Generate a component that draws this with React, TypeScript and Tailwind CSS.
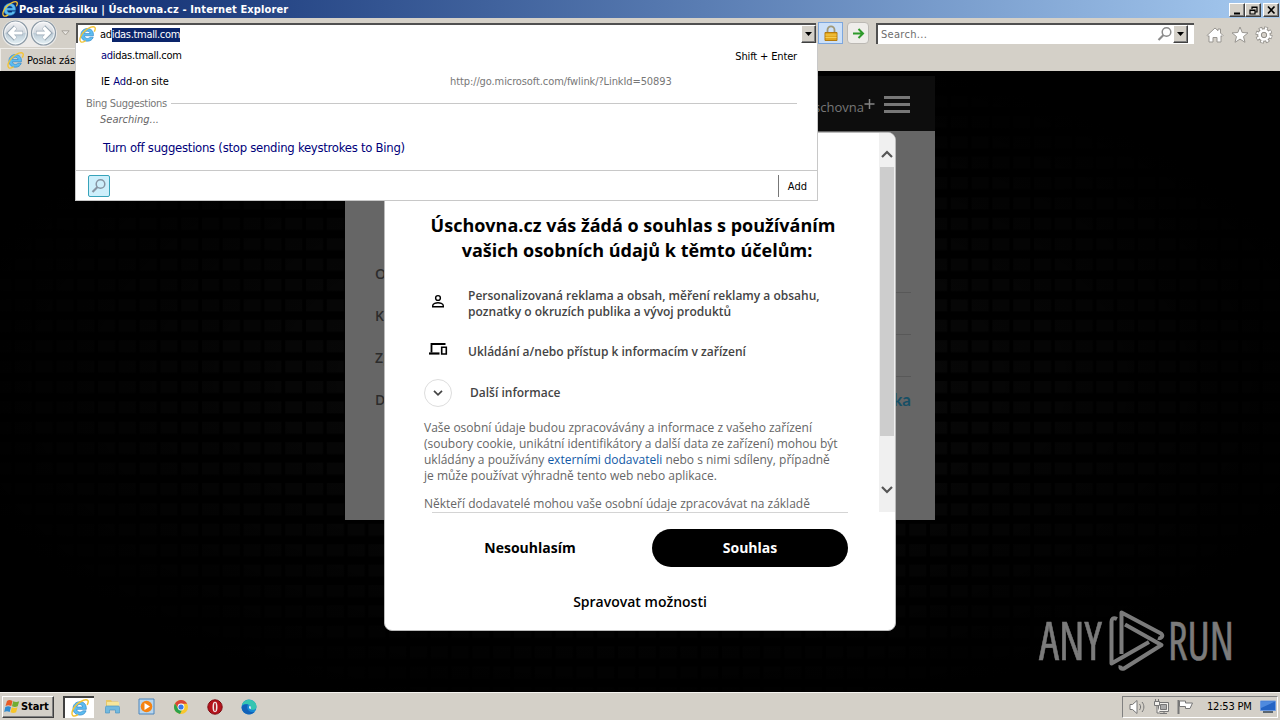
import type { ReactNode } from 'react';

const tahoma = "font-['DejaVu_Sans_Condensed','DejaVu_Sans',sans-serif] [font-stretch:condensed]";
const openSans = "font-['Open_Sans',sans-serif] [font-stretch:normal]";
const raised = "border border-t-white border-l-white border-r-[#404040] border-b-[#404040] bg-[#d4d0c8] shadow-[inset_-1px_-1px_0_#808080]";

const IeIcon = ({ size = 16 }: { size?: number }) => (
    <svg width={size} height={size} viewBox="0 0 16 16" className="shrink-0">
        <path d="M13.6 9.2H5.1c.2 1.7 1.4 2.5 2.9 2.5 1.1 0 1.9-.4 2.3-1.2h3.1C12.6 13 10.600 14.300 8 14.300c-3.700 0-6.200-2.400-6.200-5.900S4.400 2.400 8 2.400c3.700 0 5.900 2.700 5.600 6.800zM5.200 7.100h5.200C10.200 5.700 9.200 4.900 7.800 4.900S5.400 5.700 5.200 7.100z" fill="#5dbcf0" stroke="#2a84c8" strokeWidth=".6" />
        <path d="M1.700 14.800C-.3 13.100 1.600 8 5.600 4.500 9.300 1.200 13.600-.2 14.900 1.300c.7.800.4 2.100-.3 3.500M1.700 14.800c.9.700 2.500.3 4.100-.7" fill="none" stroke="#f4c434" strokeWidth="1.300" strokeLinecap="round" />
    </svg>
);

const Magnifier = ({ color }: { color: string }) => (
    <svg width="16" height="16" viewBox="0 0 16 16" fill="none" className="shrink-0" stroke={color}>
        <circle cx="9.500" cy="6" r="4.300" strokeWidth="1.500" />
        <path d="M6.500 9L1.500 14" strokeWidth="2.200" />
    </svg>
);

const TitleBar = () => (
    <div className="flex h-[18px] shrink-0 items-center bg-linear-to-r from-[#0a246a] to-[#a6caf0] pr-[1px] pl-[2px]">
        <IeIcon />
        <span className="mt-[2px] ml-[1px] flex-1 text-[11px] font-bold tracking-[0.12px] whitespace-nowrap text-white">Poslat zásilku | Úschovna.cz - Internet Explorer</span>
        <div className="mt-px flex">
            <WinButton><path d="M3 9.500h6" strokeWidth="2" /></WinButton>
            <WinButton><path d="M5 5V3h5v5H8M5 3.500h5M3 6h5v4H3zM3 6.500h5" strokeWidth="1.200" /></WinButton>
            <span className="w-[2px]" />
            <WinButton><path d="M3 2.500l6.500 7M9.500 2.500L3 9.500" strokeWidth="1.700" /></WinButton>
        </div>
    </div>
);

const WinButton = ({ children }: { children: ReactNode }) => (
    <button className={`flex h-[14px] w-[16px] items-center justify-center ${raised}`}>
        <svg width="13" height="12" viewBox="0 0 13 12" fill="none" stroke="#000">{children}</svg>
    </button>
);

const DropButton = () => (
    <button className={`flex h-[18px] w-[15px] shrink-0 items-center justify-center ${raised}`}>
        <svg width="7" height="4"><path d="M0 0h7L3.500 4z" fill="#000" /></svg>
    </button>
);

const NavCircle = ({ back }: { back?: boolean }) => (
    <svg width="27" height="26" viewBox="0 0 27 26">
        <defs>
            <linearGradient id="nav" x1="0" y1="0" x2="0" y2="1">
                <stop offset="0" stopColor="#f4f4f6" />
                <stop offset=".48" stopColor="#d3d9df" />
                <stop offset=".52" stopColor="#bccbd6" />
                <stop offset="1" stopColor="#e6f2f6" />
            </linearGradient>
        </defs>
        <circle cx="13.500" cy="13" r="12" fill="url(#nav)" stroke="#8c9aa6" strokeWidth="1.200" />
        <circle cx="13.500" cy="13" r="10.800" fill="none" stroke="#fff" strokeOpacity=".7" />
        <g transform={back ? undefined : 'translate(27 0) scale(-1 1)'} fill="none">
            <path d="M21 13H8M13.500 7l-6 6 6 6" stroke="#98a7b4" strokeWidth="4.600" />
            <path d="M20.500 13H8M13.500 7.500L8 13l5.500 5.500" stroke="#fff" strokeWidth="3.200" />
        </g>
    </svg>
);

const Toolbar = () => (
    <div className="h-[53px] shrink-0 bg-[#d4d0c8]">
        <div className="flex h-[30px] items-center">
            <div className="flex w-[76px] items-center pl-[2px]">
                <div className="flex h-[27px] gap-px rounded-full bg-[#eceae8]">
                    <NavCircle back />
                    <NavCircle />
                </div>
                <svg width="9" height="6" className="ml-[4px]"><path d="M.8.800h7.400L4.500 5z" fill="#e8e6e2" stroke="#a6a29a" /></svg>
            </div>
            <div className="flex h-[21px] w-[740px] items-center border-t-2 border-l-2 border-t-[#505050] border-l-[#505050] bg-white pl-[1px]">
                <IeIcon size={17} />
                <div className="ml-[4px] flex-1 text-[11px] leading-[15px] tracking-[-0.32px]">
                    ad<span className="inline-block h-[14px] bg-[#0a246a] leading-[14px] text-white">idas.tmall.com</span>
                </div>
                <DropButton />
            </div>
            <div className="ml-[2px] flex h-[22px] w-[25px] items-center justify-center border border-[#7da7de] bg-[#cce0f8]">
                <svg width="14" height="17" viewBox="0 0 14 17">
                    <path d="M3.500 8V5a3.500 3.700 0 017 0v3" fill="none" stroke="#a09878" strokeWidth="1.800" />
                    <path d="M1 7.500h12v8H1z" fill="#e3a71c" stroke="#b47b10" />
                    <path d="M1.500 10h11M1.500 12.500h11" stroke="#f4cd55" />
                </svg>
            </div>
            <div className="ml-[4px] flex h-[22px] w-[22px] items-center justify-center rounded-sm border border-[#bcb9b4] bg-[#efedea]">
                <svg width="13" height="11" viewBox="0 0 13 11" fill="none" stroke="#2f9a2b" strokeWidth="2"><path d="M1 5.500h10M6.500 1L11 5.500 6.500 10" /></svg>
            </div>
            <div className="ml-[7px] flex h-[21px] w-[318px] items-center border-t-2 border-l-2 border-t-[#505050] border-l-[#505050] bg-white pl-[3px] text-[11px] text-[#6d6d6d]">
                <span className="mt-[2px] flex-1 tracking-[0.3px]">Search...</span>
                <Magnifier color="#8b8b8b" />
                <DropButton />
                <span className="w-[6px]" />
            </div>
            <div className="mt-[4px] ml-[12px] flex gap-[7px]">
                <svg width="18" height="18" viewBox="0 0 18 18"><path d="M1 9.500L9 2l3 2.700V3h2.500v4L17 9.500l-1 1-1-.8V16h-4v-4.500H7V16H3V9.700l-1 .8z" fill="#fff" stroke="#989590" /></svg>
                <svg width="18" height="18" viewBox="0 0 18 18"><path d="M9 1l2.200 5.500 5.800.4-4.500 3.700 1.500 5.700-5-3.200-5 3.200 1.500-5.700L1 6.900l5.800-.4z" fill="#fff" stroke="#989590" /></svg>
                <svg width="18" height="18" viewBox="0 0 18 18" fill="none" className="-ml-px">
                    <circle cx="9" cy="9" r="6.600" stroke="#918e89" strokeWidth="3.800" strokeDasharray="3.500 1.680" />
                    <circle cx="9" cy="9" r="5.500" stroke="#918e89" strokeWidth="2.600" />
                    <circle cx="9" cy="9" r="6.600" stroke="#fff" strokeWidth="2.400" strokeDasharray="2.100 3.080" strokeDashoffset="-.7" />
                    <circle cx="9" cy="9" r="4.400" stroke="#fff" strokeWidth="2.800" />
                    <circle cx="9" cy="9" r="2.700" stroke="#918e89" />
                </svg>
            </div>
        </div>
        <div className="flex h-[23px] w-[75px] items-center border-t border-l border-[#eeece8] pl-[6px]">
            <IeIcon size={17} />
            <span className="mt-[2px] ml-[3px] w-[48px] overflow-hidden text-[11px] tracking-[-0.1px] whitespace-nowrap">Poslat zás</span>
        </div>
    </div>
);

const Suggestions = () => (
    <div className="absolute top-[43px] left-[75px] flex h-[158px] w-[743px] flex-col border border-t-0 border-[#c8c8c8] bg-white text-[11px] leading-[14px] whitespace-nowrap">
        <div className="flex pt-[6px] pr-[20px] pl-[25px]">
            <span className="flex-1 tracking-[-0.28px]"><b className="font-normal text-[#00007a]">ad</b>idas.tmall.com</span>
            <span className="mt-px tracking-[-0.15px]">Shift + Enter</span>
        </div>
        <div className="flex pt-[11px] pl-[25px]">
            <span className="w-[349px] tracking-[-0.05px]">IE <b className="font-normal text-[#00007a]">Ad</b>d-on site</span>
            <span className="tracking-[-0.1px] text-[#777]">http://go.microsoft.com/fwlink/?LinkId=50893</span>
        </div>
        <div className="flex items-center pt-[8px] pr-[20px] pl-[10px] text-[#777]">
            <span className="tracking-[-0.3px]">Bing Suggestions</span>
            <span className="mb-[2px] ml-[4px] h-px flex-1 bg-[#c8c8c8]" />
        </div>
        <div className="pt-[2px] pl-[24px] text-[#666] italic">Searching...</div>
        <div className="pt-[14px] pl-[27px] text-[13px] tracking-[-0.28px] text-[#00007a]">Turn off suggestions (stop sending keystrokes to Bing)</div>
        <div className="mt-auto flex h-[30px] items-center border-t border-[#c8c8c8] pl-[12px]">
            <span className="flex h-[22px] w-[22px] items-center justify-center rounded-[2px] border border-[#37a3ba] bg-[#cdeffb]"><Magnifier color="#8795a3" /></span>
            <span className="ml-auto h-[22px] w-px bg-[#777]" />
            <span className="mt-[2px] mr-[10px] ml-[9px]">Add</span>
        </div>
    </div>
);

const FormRow = ({ label, children }: { label: string, children?: ReactNode }) => (
    <div className="flex h-[42px]">
        <span className="w-[120px] pt-[12px]">{label}</span>
        <span className="flex-1 border-b border-[#585858] pt-[11px] text-right">{children}</span>
    </div>
);

const UschovnaPage = () => (
    <div className={`mx-auto h-[444px] w-[590px] bg-[#666] ${openSans}`}>
        <div className="flex h-[55px] items-center justify-end bg-[#0d0d0d] pr-[25px] text-[#777]">
            <span className="mt-[8px] text-[13px]">Úschovna</span>
            <svg width="11" height="11" className="mt-px mr-[9px]"><path d="M5.500 0v10M.5 5h10" stroke="#858585" strokeWidth="1.500" /></svg>
            <div className="mt-[2px] flex flex-col gap-[4px]">
                <span className="h-[3px] w-[26px] bg-[#777]" />
                <span className="h-[3px] w-[26px] bg-[#777]" />
                <span className="h-[3px] w-[26px] bg-[#777]" />
            </div>
        </div>
        <div className="pt-[120px] pr-[24px] pl-[30px] text-[14px] font-semibold text-[#2c2c2c]">
            <FormRow label="Od" />
            <FormRow label="Komu" />
            <FormRow label="Zpráva" />
            <div className="flex h-[42px] justify-between pt-[12px]"><span>Doručení</span><span className="-mt-px font-['Lato',sans-serif] text-[17px] leading-[24px] font-bold text-[#174f65]">Zásilka</span></div>
        </div>
    </div>
);

const ConsentDialog = () => (
    <div className={`absolute top-[132px] left-[384px] flex h-[499px] w-[512px] flex-col overflow-hidden rounded-lg border border-[#bbb] bg-white text-[#444] ${openSans}`}>
        <div className="flex h-[379px]">
            <div className="w-[494px] overflow-hidden px-[39px] pt-[80px]">
                <h1 className="w-[420px] -translate-x-px text-center text-[18px] leading-[25px] font-bold whitespace-nowrap text-black">Úschovna.cz vás žádá o souhlas s používáním<br /><span className="relative left-[4px]">vašich osobních údajů k těmto účelům:</span></h1>
                <div className="mt-[25px] flex text-[12px] leading-[16px] font-semibold whitespace-nowrap">
                    <svg width="28" height="28" viewBox="0 0 28 28" className="mr-[16px]" fill="none" stroke="#000" strokeWidth="1.400"><circle cx="14" cy="10" r="2.400" /><path d="M8.700 18.800v-1.100c0-2 3.500-3 5.300-3s5.300 1 5.300 3v1.100z" /></svg>
                    <p>Personalizovaná reklama a obsah, měření reklamy a obsahu,<br />poznatky o okruzích publika a vývoj produktů</p>
                </div>
                <div className="mt-[16px] flex h-[32px] items-center text-[12px] font-semibold">
                    <svg width="28" height="28" viewBox="0 0 28 28" className="mr-[16px] mb-[4px]" fill="none" stroke="#000"><path d="M7.500 16.500V8H21.500" strokeWidth="1.800" /><path d="M5 17.500h10.500" strokeWidth="2.200" /><path d="M17.700 11.200h4.600v6.800h-4.600z" strokeWidth="1.600" /></svg>
                    Ukládání a/nebo přístup k informacím v zařízení
                </div>
                <div className="mt-[11px] flex h-[28px] items-center text-[12px] font-semibold">
                    <span className="mr-[18px] flex h-[28px] w-[28px] items-center justify-center rounded-full border border-[#ddd]">
                        <svg width="10" height="6" fill="none" stroke="#444" strokeWidth="1.700"><path d="M1 .8l4 4 4-4" /></svg>
                    </span>
                    Další informace
                </div>
                <p className="mt-[13px] text-[12px] leading-[16px] whitespace-nowrap text-[#666]">Vaše osobní údaje budou zpracovávány a informace z vašeho zařízení<br />(soubory cookie, unikátní identifikátory a další data ze zařízení) mohou být<br />ukládány a používány <a className="text-[#1259a6]">externími dodavateli</a> nebo s nimi sdíleny, případně<br />je může používat výhradně tento web nebo aplikace.</p>
                <p className="mt-[12px] text-[12px] leading-[16px] whitespace-nowrap text-[#666]">Někteří dodavatelé mohou vaše osobní údaje zpracovávat na základě</p>
            </div>
            <div className="flex w-[16px] flex-col items-center bg-[#f0f0f0] pt-[17px]">
                <svg width="12" height="8" fill="none" stroke="#555" strokeWidth="2.200"><path d="M1 7l5-5 5 5" /></svg>
                <span className="mt-[9px] h-[269px] w-[14px] bg-[#cdcdcd]" />
                <svg width="12" height="8" className="mt-[50px]" fill="none" stroke="#555" strokeWidth="2.200"><path d="M1 1l5 5 5-5" /></svg>
            </div>
        </div>
        <div className="mr-[47px] ml-[47px] border-t border-[#d4d4d4] pt-[16px] text-[14px] font-bold text-black">
            <div className="flex justify-between">
                <button className="h-[38px] w-[196px] pb-px">Nesouhlasím</button>
                <button className="h-[38px] w-[196px] rounded-full bg-black pb-px text-white">Souhlas</button>
            </div>
            <button className="mt-[15px] h-[38px] w-full font-semibold">Spravovat možnosti</button>
        </div>
    </div>
);

const Watermark = () => (
    <div className="absolute top-[597px] left-[1030px]">
        <svg width="220" height="88" viewBox="-8 -12 220 88" className="font-['Open_Sans',sans-serif] text-[52px] [font-stretch:condensed]">
            <g fill="#7b7b7b" stroke="#7b7b7b" strokeWidth=".6">
                <text x="1" y="50.500" textLength="63" lengthAdjust="spacingAndGlyphs">ANY</text>
                <text x="130" y="50.500" textLength="66" lengthAdjust="spacingAndGlyphs">RUN</text>
            </g>
            <g fill="none" stroke="#7b7b7b" strokeWidth="4" strokeLinejoin="round">
                <path d="M79 10c-4-2-5.500 0-5.500 3v41.500L111 33" />
                <path d="M83.500 45V3.500L123 24.500c3 3-.5 5.500-3 4.500" />
                <path d="M87 15.500L123.500 36 86 59.500c-3 1-4-.5-3.500-3" />
            </g>
        </svg>
    </div>
);

const Task = ({ children, active }: { children: ReactNode; active?: boolean }) => (
    <div className={`flex h-[22px] w-[31px] items-center justify-center ${active ? 'border-t-2 border-l-2 border-[#404040] bg-white' : ''}`}>{children}</div>
);

const Taskbar = () => (
    <div className="flex h-[28px] shrink-0 items-center border-t border-[#f4f2ee] bg-[#d4d0c8] text-[11px]">
        <button className={`ml-[2px] flex h-[22px] w-[52px] items-center pl-px font-bold ${raised}`}>
            <svg width="17" height="17" viewBox="0 0 17 17">
                <path d="M3 3c2-1.500 3.500-1 5.500 0L7.300 8C5 7 3.500 7 1.500 8z" fill="#e85b24" />
                <path d="M9.200 3.300c2 1 4 1 6 0l-1.500 5c-2 1-3.500 1-5.700 0z" fill="#71ad32" />
                <path d="M1.300 9C3.300 8 5 8 7 9l-1.300 5c-2-1-3.500-1-5.500 0z" fill="#318bd0" />
                <path d="M7.800 9.300c2 1 4 1 5.700 0l-1.400 5c-2 1-3.500 1-5.600 0z" fill="#f7c529" />
            </svg>
            <span className="mt-[2px] tracking-[-0.1px]">Start</span>
        </button>
        <div className="ml-[9px] flex gap-[3px]">
            <Task active><IeIcon size={18} /></Task>
            <Task><svg width="17" height="17" viewBox="0 0 17 17"><path d="M2 2h5l1 1.500h6V12H2z" fill="#e8c766" /><path d="M3 4h12v7H3z" fill="#f7e59a" /><path d="M1.500 15V9.500c0-1 .5-1.500 1.500-1.500h11c1 0 1.500.5 1.500 1.500V15h-4v-3h-6v3z" fill="#72b9df" stroke="#4c96c4" strokeWidth=".7" /></svg></Task>
            <Task><svg width="17" height="17" viewBox="0 0 17 17"><path d="M1 1h15v15H1z" fill="#b8d6ee" stroke="#4d86bd" /><circle cx="8.500" cy="8.500" r="5.800" fill="#f58312" /><path d="M6.500 5v7l5.500-3.500z" fill="#fff" /></svg></Task>
            <Task><svg width="16" height="16" viewBox="0 0 16 16"><circle cx="8" cy="8" r="7" fill="#f9c72c" /><path d="M2 4.400A7 7 0 0114.100 4.700H8a3.300 3.300 0 00-3 4.600z" fill="#db4437" /><path d="M2 4.400l3.100 5A3.300 3.300 0 009 11l-2 3.900A7 7 0 012 4.400z" fill="#2ba24c" /><circle cx="8" cy="8" r="3.400" fill="#fff" /><circle cx="8" cy="8" r="2.600" fill="#3978e8" /></svg></Task>
            <Task><svg width="16" height="16" viewBox="0 0 16 16"><circle cx="8" cy="8" r="7.200" fill="#b5121b" stroke="#7e0b12" /><ellipse cx="8" cy="8" rx="2.500" ry="5.200" fill="#f1e6e6" /><ellipse cx="8" cy="8" rx=".9" ry="4.200" fill="#a60c14" /></svg></Task>
            <Task><svg width="16" height="16" viewBox="0 0 16 16"><circle cx="8" cy="8" r="7.500" fill="#1689d4" /><path d="M.8 6.500C2 1.500 7-.5 11 1.300c3.500 1.600 5 5 4.300 7.200-.6 2.200-3.500 3-5.800 1.800 1-1.500.5-4-2-4.700C4.600 4.800 2 5.500.8 6.500z" fill="#36c5b1" /><path d="M7 5.600C5 8 6 13.500 13.500 13 9 17.500 1 15 .6 8.500 1 6 4 4.500 7 5.600z" fill="#1261b8" /><path d="M9.500 10.300c-2-.8-1.500-2.500-.7-3.800 1 .9 1.300 2.400.7 3.800z" fill="#fff" /></svg></Task>
        </div>
        <div className="mr-[2px] ml-auto flex h-[22px] w-[156px] items-center border border-t-[#808080] border-r-white border-b-white border-l-[#808080] pl-[6px]">
            <svg width="17" height="16" viewBox="0 0 17 16" fill="#fff" stroke="#777"><path d="M1 5.500h2.500L8 1.500v13l-4.500-4H1z" /><path d="M10.500 5c1.500 2 1.500 4 0 6M13 3c2.500 3 2.500 7 0 10" fill="none" /></svg>
            <svg width="17" height="16" viewBox="0 0 17 16" className="ml-[7px]" fill="#f3f1ed" stroke="#777"><path d="M5.500 3.500h10v9h-10zM7 14.500h7M11 12.500v2" /><path d="M7.500 5.500h6v5h-6z" fill="#aaa" /><path d="M1.500 2.500h5v4h-5zM2.500 0v2M5.500 0v2M4 6.500V14h3" /></svg>
            <svg width="17" height="16" viewBox="0 0 17 16" className="ml-[7px]" fill="#fff" stroke="#777"><path d="M1.500 1v14" strokeWidth="2" /><path d="M2.500 2h6v2h7L13 9.500H8.500v-2h-6z" /></svg>
            <span className="mt-[2px] ml-[13px] flex-1 tracking-[-0.2px] whitespace-nowrap">12:53 PM</span>
            <svg width="16" height="14" viewBox="0 0 16 14" className="mr-px"><path d="M.5 1h15v9.500H.5z" fill="#2564c4" stroke="#6d9ae0" /><path d="M1 1.500h14L1 8z" fill="#4f8ade" /><path d="M3 12h10" stroke="#345" strokeWidth="1.500" /></svg>
        </div>
    </div>
);

const App = () => (
    <div className={`relative flex h-[720px] w-[1280px] flex-col overflow-hidden text-black ${tahoma}`}>
        <TitleBar />
        <Toolbar />
        <div className="relative flex-1 bg-black pt-[5px]">
            <svg className="absolute inset-0 h-full w-full">
                <defs>
                    <pattern id="tiles" width="20.800" height="20.400" patternUnits="userSpaceOnUse" x="14.800" y="4"><rect width="17" height="12" fill="#080808" /></pattern>
                    <radialGradient id="fade" cx=".5" cy=".5" r=".55"><stop offset=".3" stopColor="#000" stopOpacity="0" /><stop offset="1" stopColor="#000" /></radialGradient>
                </defs>
                <rect width="100%" height="100%" fill="url(#tiles)" />
                <rect width="100%" height="100%" fill="url(#fade)" />
            </svg>
            <div className="relative"><UschovnaPage /></div>
        </div>
        <Taskbar />
        <ConsentDialog />
        <Suggestions />
        <Watermark />
    </div>
);

export default App
